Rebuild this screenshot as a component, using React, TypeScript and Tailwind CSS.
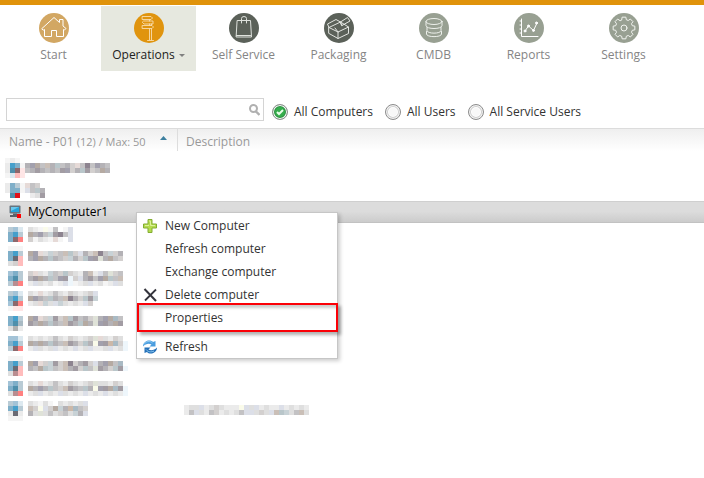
import type { ReactNode } from "react";

type Strip = { x: number; y: number; rows: string[] };

const palette: Record<string, string> = {
  a: "#f5f5f5", b: "#ebebeb", c: "#dfdfdf", d: "#d3d0cf", e: "#c3c2c4",
  f: "#b4b2b6", g: "#a29ca3", h: "#8d8490", i: "#b9c6ca", j: "#e6dad7",
  k: "#b5aaa2", l: "#cabfb7", m: "#a2a0ad", n: "#dcdfe8", o: "#fafbea",
  p: "#c8d2d6", q: "#dfe2d8", r: "#eef6fb", s: "#ccb8a8", t: "#a9bac4",
  A: "#4a9cc6", B: "#459fcb", C: "#a3c3d7", D: "#7fafc9", E: "#4f8fab",
  F: "#b9cbd5", G: "#dde9f0", R: "#ff8080", S: "#ffbcbc", T: "#ffe6e6",
  U: "#8d686c", V: "#b98d90", W: "#6b6b74", X: "#b0b0b0", Z: "#e0101a",
};

// Redacted names: every character is one 5px cell, a space is left blank.
const hidden: Record<string, Strip[]> = {
  r1: [
    { x: 5, y: 1, rows: ["aba ", "bBDa", "bEUT", "aGST"] },
    { x: 25, y: 6, rows: ["fmkelfiefdjehemfe", "efgfefegmdfigdekf"] },
  ],
  r2: [
    { x: 5, y: 4, rows: ["bDFa", "bDDa", " EZ "] },
    { x: 25, y: 4, rows: ["jed ", "neif", " bcg"] },
  ],
  r4: [
    { x: 8, y: 3, rows: ["FCG", "DBF", "DUR"] },
    { x: 28, y: 3, rows: ["cbaoae an", "kfmepghen", "dacbaja n"] },
  ],
  r5: [
    { x: 8, y: 1, rows: ["aaa", "DBF", "DWS", "cdS"] },
    { x: 28, y: 6, rows: ["kmjcpdelidnfdlhepdf", "fmkfifedpfdimgqfked"] },
  ],
  r6: [
    { x: 8, y: 4, rows: ["CDF", "DEF", "FVR"] },
    { x: 28, y: 4, rows: ["djcbpedidcbflbneqde", "fgkfiemgrdnfgemkiel", "bncbcabnrabcnbcabnc"] },
  ],
  r7: [
    { x: 8, y: 2, rows: ["FCG", "DBF", "CUR", "aTT"] },
    { x: 28, y: 2, rows: ["cbjbcecbdcbcdn", "kmfeifelhfdigp", "bcjpcnpcbcbnd "] },
  ],
  r8: [
    { x: 8, y: 5, rows: ["DBF", "DEt", "cXb"] },
    { x: 28, y: 5, rows: ["kmjdpgdligefdqfmkte", "gfkfifelgfikfqmgfkg"] },
  ],
  r9: [
    { x: 8, y: 3, rows: ["CCG", "DBF", "FUR"] },
    { x: 28, y: 3, rows: ["cbcbcecbdcbcdqjcbdc", "kfkfifelgfdifomgstdr", "bncbcnbcbnbcnbbcnbcr"] },
  ],
  r10: [
    { x: 8, y: 1, rows: ["aaa", "DBF", "DWS", "cVS"] },
    { x: 28, y: 6, rows: ["kmjdpgdlhdfgdnfmket", "fekipedlfgdieqgfdigr"] },
  ],
  r11: [
    { x: 8, y: 4, rows: ["CDF", "DEF", "cVR"] },
    { x: 28, y: 4, rows: ["cbjbcecbdcbcdqccbdc", "kfmfiedlgfeifomgktgr", "bcnbcbncbcbnbcbnbcbr"] },
  ],
  r12: [
    { x: 8, y: 2, rows: ["FCG", "DBF", "bWb", "aaa"] },
    { x: 28, y: 2, rows: ["cbaca cbcbcn", "ldondkpfsted", "fcqcecdecpfn"] },
  ],
  d12: [
    { x: 0, y: 6, rows: ["bccnbcdcbbboncnbcbbnbcbcb", "bencbedbcbcenncdcnlipcelc"] },
  ],
};

function Mosaic({ strips, width }: { strips: Strip[]; width: number }) {
  return (
    <svg width={width} height={21} className="block overflow-visible" shapeRendering="crispEdges" aria-hidden="true">
      {strips.flatMap((s, n) =>
        s.rows.flatMap((row, r) =>
          [...row].map((c, i) =>
            c === " " ? null : (
              <rect key={`${n}-${r}-${i}`} x={s.x + i * 5} y={s.y + r * 5} width={5} height={5} fill={palette[c]} />
            ),
          ),
        ),
      )}
    </svg>
  );
}

function Disc({ color, children }: { color: string; children: ReactNode }) {
  return (
    <svg width="30" height="30" viewBox="0 0 30 30" fill="none" stroke="#fff" strokeWidth="1" strokeLinejoin="round" strokeLinecap="round" aria-hidden="true">
      <circle cx="15" cy="15" r="15" fill={color} stroke="none" />
      {children}
    </svg>
  );
}

function gearPath() {
  const pts: string[] = [];
  for (let i = 0; i < 8; i++) {
    const base = (i * Math.PI) / 4;
    for (const [off, r] of [[-0.27, 8.6], [-0.17, 11], [0.17, 11], [0.27, 8.6]]) {
      pts.push(`${(15 + r * Math.sin(base + off)).toFixed(2)} ${(15 - r * Math.cos(base + off)).toFixed(2)}`);
    }
  }
  return `M${pts.join("L")}Z`;
}

const nav: { label: string; icon: ReactNode; active?: boolean }[] = [
  {
    label: "Start",
    icon: (
      <Disc color="#d2a763">
        <path d="M3 15.5 15 4.5l5.500 5V6.500h3.500V13l3 2.500-1.500 1.500-1-.5v7h-7v-6h-5v6h-7v-7l-1 .5z" />
      </Disc>
    ),
  },
  {
    label: "Operations",
    active: true,
    icon: (
      <Disc color="#e0940e">
        <g stroke="#f8dcae" strokeWidth="0.9">
          <path d="M8.500 3.500h8.500l1.500 1.500-1.500 1.500H8.500zM10 8h9v3H10L8.500 9.500zM8.500 12.500H18l1.500 1.500-1.500 1.500H8.500z" />
          <path d="M15.500 15.500v11.500M17.500 15.500v11.500M13.500 27.500h6M15.500 6.500V8M15.500 11v1.500M17.500 11v1.500" />
        </g>
      </Disc>
    ),
  },
  {
    label: "Self Service",
    icon: (
      <Disc color="#5b6159">
        <path stroke="#dfe2dd" d="M8.500 7.500h13l1 16.500h-15zM12.500 10V5.500q0-2 2.500-2t2.500 2V10M7.500 22.500h14" />
      </Disc>
    ),
  },
  {
    label: "Packaging",
    icon: (
      <Disc color="#5b6159">
        <path stroke="#e4e6e2" d="M5 14.500 14 19l10.500-5v6.500L14 25.500 5 20.500zM14 19v6.500M5 14.500 3.500 11 12 6.500l4.500 2.500L5 14.500M16.500 9l7-4.500 2.500 3.500-8 4.500zM16.500 9l8 5M18 12.500l-1.500-3.500M14 19l-3-4" />
      </Disc>
    ),
  },
  {
    label: "CMDB",
    icon: (
      <Disc color="#98a092">
        <g stroke="#edf0eb">
          <ellipse cx="15" cy="8.500" rx="8" ry="3" />
          <path d="M7 8.500v4c0 4 16 4 16 0v-4M8 14.500v3c0 3.500 14 3.500 14 0v-3M7.500 18.500v2.500c0 3.500 15 3.500 15 0v-2.500" />
        </g>
      </Disc>
    ),
  },
  {
    label: "Reports",
    icon: (
      <Disc color="#98a092">
        <path d="M7.500 6v17.500H24M6 8h1.500M6 12h1.500M6 16h1.500M6 20h1.500" />
        <path d="m11 18 3.500-5 5 4.500 3.500-7.500" />
        <g fill="#fff">
          <circle cx="11" cy="18" r="1" /><circle cx="14.500" cy="13" r="1" />
          <circle cx="19.500" cy="17.500" r="1" /><circle cx="22.500" cy="10" r="1" />
        </g>
      </Disc>
    ),
  },
  {
    label: "Settings",
    icon: (
      <Disc color="#98a092">
        <g stroke="#f2f4f0">
          <path d={gearPath()} />
          <circle cx="15" cy="15" r="3" />
        </g>
      </Disc>
    ),
  },
];

function Choice({ label, checked }: { label: string; checked?: boolean }) {
  return (
    <label className="flex items-center gap-1.5">
      <span className="grid size-4 place-items-center">
        <input
          type="radio"
          name="scope"
          defaultChecked={checked}
          className="peer col-start-1 row-start-1 size-4 appearance-none rounded-full border border-[#8c8c8c] bg-[#f8f8f8] bg-clip-padding shadow-[inset_0_0_0_1px_#f4f4f4,inset_0_0_0_2px_#cfcfcf,inset_0_0_0_3px_#fff] checked:bg-[#35ad4c] checked:shadow-[inset_0_0_0_1px_#fff,inset_0_0_0_2px_#2d8f42]"
        />
        <svg className="pointer-events-none invisible col-start-1 row-start-1 peer-checked:visible" width="10" height="10" viewBox="0 0 10 10" fill="none" stroke="#e9ffe9" strokeWidth="2" aria-hidden="true">
          <path d="m2 5 2 2 4-4" />
        </svg>
      </span>
      {label}
    </label>
  );
}

const rows = ["r1", "r2", "MyComputer1", "r4", "r5", "r6", "r7", "r8", "r9", "r10", "r11", "r12"];

function ComputerIcon() {
  return (
    <svg width="13" height="13" viewBox="0 0 13 13" aria-hidden="true">
      <rect x="0.500" y="0.500" width="11" height="8" rx="1" fill="#667580" />
      <rect x="2" y="2" width="8" height="5" fill="#25a5dc" />
      <path d="M2 2h8L2 6z" fill="#6bc7ec" />
      <path d="M4 8.500h4v2H4zM1 10h8v2H1z" fill="#59626a" />
      <path d="M8 9h4v4H8z" fill="#ff0000" />
    </svg>
  );
}

const plusIcon = (
  <svg width="14" height="14" viewBox="0 0 14 14" aria-hidden="true">
    <path d="M5 .5h4V5h4.500v4H9v4.500H5V9H.5V5H5z" fill="#b5dc4e" stroke="#83ad32" />
    <path d="M6 2h1.500v4.500H12M2 6.500h4" stroke="#dcf09c" fill="none" />
  </svg>
);
const crossIcon = (
  <svg width="14" height="14" viewBox="0 0 14 14" fill="none" stroke="#34343c" aria-hidden="true">
    <path d="M1.500 1 13 13" strokeWidth="2" />
    <path d="M13 1.500 2 12.500" strokeWidth="1.800" />
  </svg>
);
const refreshIcon = (
  <svg width="14" height="14" viewBox="0 0 14 14" aria-hidden="true">
    <path d="M0 6.500C0 3 3 .5 6 .5c2 0 3 .5 4 1.500L12.500 1v5.500H6.500L8.500 4.500C5.500 3 2.500 4 0 6.500z" fill="#4a9ddf" />
    <path d="M14 7.500c0 3.500-3 6-6 6-2 0-3-.5-4-1.500L1.500 13V7.500h6l-2 2c3 1.500 6 .5 8.500-2z" fill="#2470b8" />
    <path d="M1 4.500C3 1 7 .5 9.500 3M3 9.500c2 2.500 5 3 8 1.500" stroke="#8ccaf2" fill="none" />
  </svg>
);

const menu: { label: string; icon?: ReactNode; marked?: boolean; spaced?: boolean }[] = [
  { label: "New Computer", icon: plusIcon },
  { label: "Refresh computer" },
  { label: "Exchange computer" },
  { label: "Delete computer", icon: crossIcon },
  { label: "Properties", marked: true },
  { label: "Refresh", icon: refreshIcon, spaced: true },
];

export default function App() {
  return (
    <div className="relative min-h-screen bg-white font-['Open_Sans','Noto_Sans',sans-serif] text-[12px] leading-4 text-[#333333]">
      <header className="border-t-5 border-[#e0930b]">
        <nav className="flex pt-px pl-1.5">
          {nav.map((item) => (
            <a
              key={item.label}
              href="#"
              className={`flex h-[65px] w-[95px] flex-col items-center gap-1 pt-[7px] ${item.active ? "bg-[#e6e8df] text-[#222222]" : "text-[#858585]"}`}
            >
              {item.icon}
              <span className="flex items-center gap-1">
                {item.label}
                {item.active && (
                  <svg width="6" height="3" viewBox="0 0 6 3" aria-hidden="true"><path d="M0 0h6L3 3z" fill="#808080" /></svg>
                )}
              </span>
            </a>
          ))}
        </nav>
      </header>

      <div className="flex items-center gap-2 pt-[27px] pb-[7px] pl-1.5">
        <label className="flex h-[23px] w-[258px] items-center border border-[#d4d4d4] pr-[3px]">
          <input type="text" aria-label="Search" className="h-full min-w-0 flex-1 px-1 outline-none" />
          <svg width="11" height="12" viewBox="0 0 11 12" fill="none" stroke="#b0b0b0" strokeWidth="2" aria-hidden="true">
            <circle cx="4.500" cy="4.500" r="3.500" /><path d="m7 7.500 3.500 3.500" strokeWidth="2.400" />
          </svg>
        </label>
        <div className="flex gap-3 pt-1">
          <Choice label="All Computers" checked />
          <Choice label="All Users" />
          <Choice label="All Service Users" />
        </div>
      </div>

      <table className="w-full table-fixed border-collapse text-left">
        <thead>
          <tr className="h-[29px] bg-linear-to-b from-[#eeeeee] to-white to-80% align-top text-[#999999] shadow-[inset_0_1px_0_#dcdcdc]">
            <th scope="col" className="w-[178px] p-0 font-normal">
              <div className="flex h-[23px] items-center justify-between border-r border-[#dddddd] pt-1 pr-2.5 pl-[9px]">
                <span>Name - P01 <span className="text-[11px]">(12) / Max: 50</span></span>
                <svg className="mb-2" width="7" height="4" viewBox="0 0 7 4" aria-hidden="true"><path d="M0 4 3.500 0 7 4z" fill="#3c7f9f" /></svg>
              </div>
            </th>
            <th scope="col" className="p-0 font-normal">
              <div className="flex h-[23px] items-center pt-1 pl-2">Description</div>
            </th>
          </tr>
        </thead>
        <tbody>
          {rows.map((id) =>
            hidden[id] ? (
              <tr key={id} className="h-[22px] align-top">
                <td className="p-0"><Mosaic strips={hidden[id]} width={170} /></td>
                <td className="p-0 pl-1.5">{id === "r12" && <Mosaic strips={hidden.d12} width={125} />}</td>
              </tr>
            ) : (
              <tr key={id} className="h-[22px] border-b border-white bg-linear-to-b from-[#dcdcdc] from-50% to-[#cccccc] text-black shadow-[inset_0_1px_0_#cfcfcf,inset_0_-1px_0_#c2c2c2]">
                <td className="p-0 pl-[9px]">
                  <div className="flex items-center gap-1.5"><ComputerIcon />{id}</div>
                </td>
                <td className="p-0" />
              </tr>
            ),
          )}
        </tbody>
      </table>

      <div role="menu" className="absolute top-[212px] left-[136px] flex w-[202px] flex-col border border-[#c6c6c6] bg-white pt-px shadow-[2px_2px_4px_rgba(0,0,0,0.2)]">
        {menu.map((item) => (
          <button
            key={item.label}
            role="menuitem"
            className={`relative flex h-[23px] items-center gap-2 pl-1.5 text-left ${item.spaced ? "mt-1.5" : ""}`}
          >
            <span className="size-3.5">{item.icon}</span>
            {item.label}
            {item.marked && (
              <span className="absolute -top-[3px] -right-px -bottom-[3px] left-0 border-2 border-[#fb0007] shadow-[3px_3px_3px_rgba(0,0,0,0.3),inset_3px_3px_3px_rgba(0,0,0,0.2)]" />
            )}
          </button>
        ))}
      </div>
    </div>
  );
}
